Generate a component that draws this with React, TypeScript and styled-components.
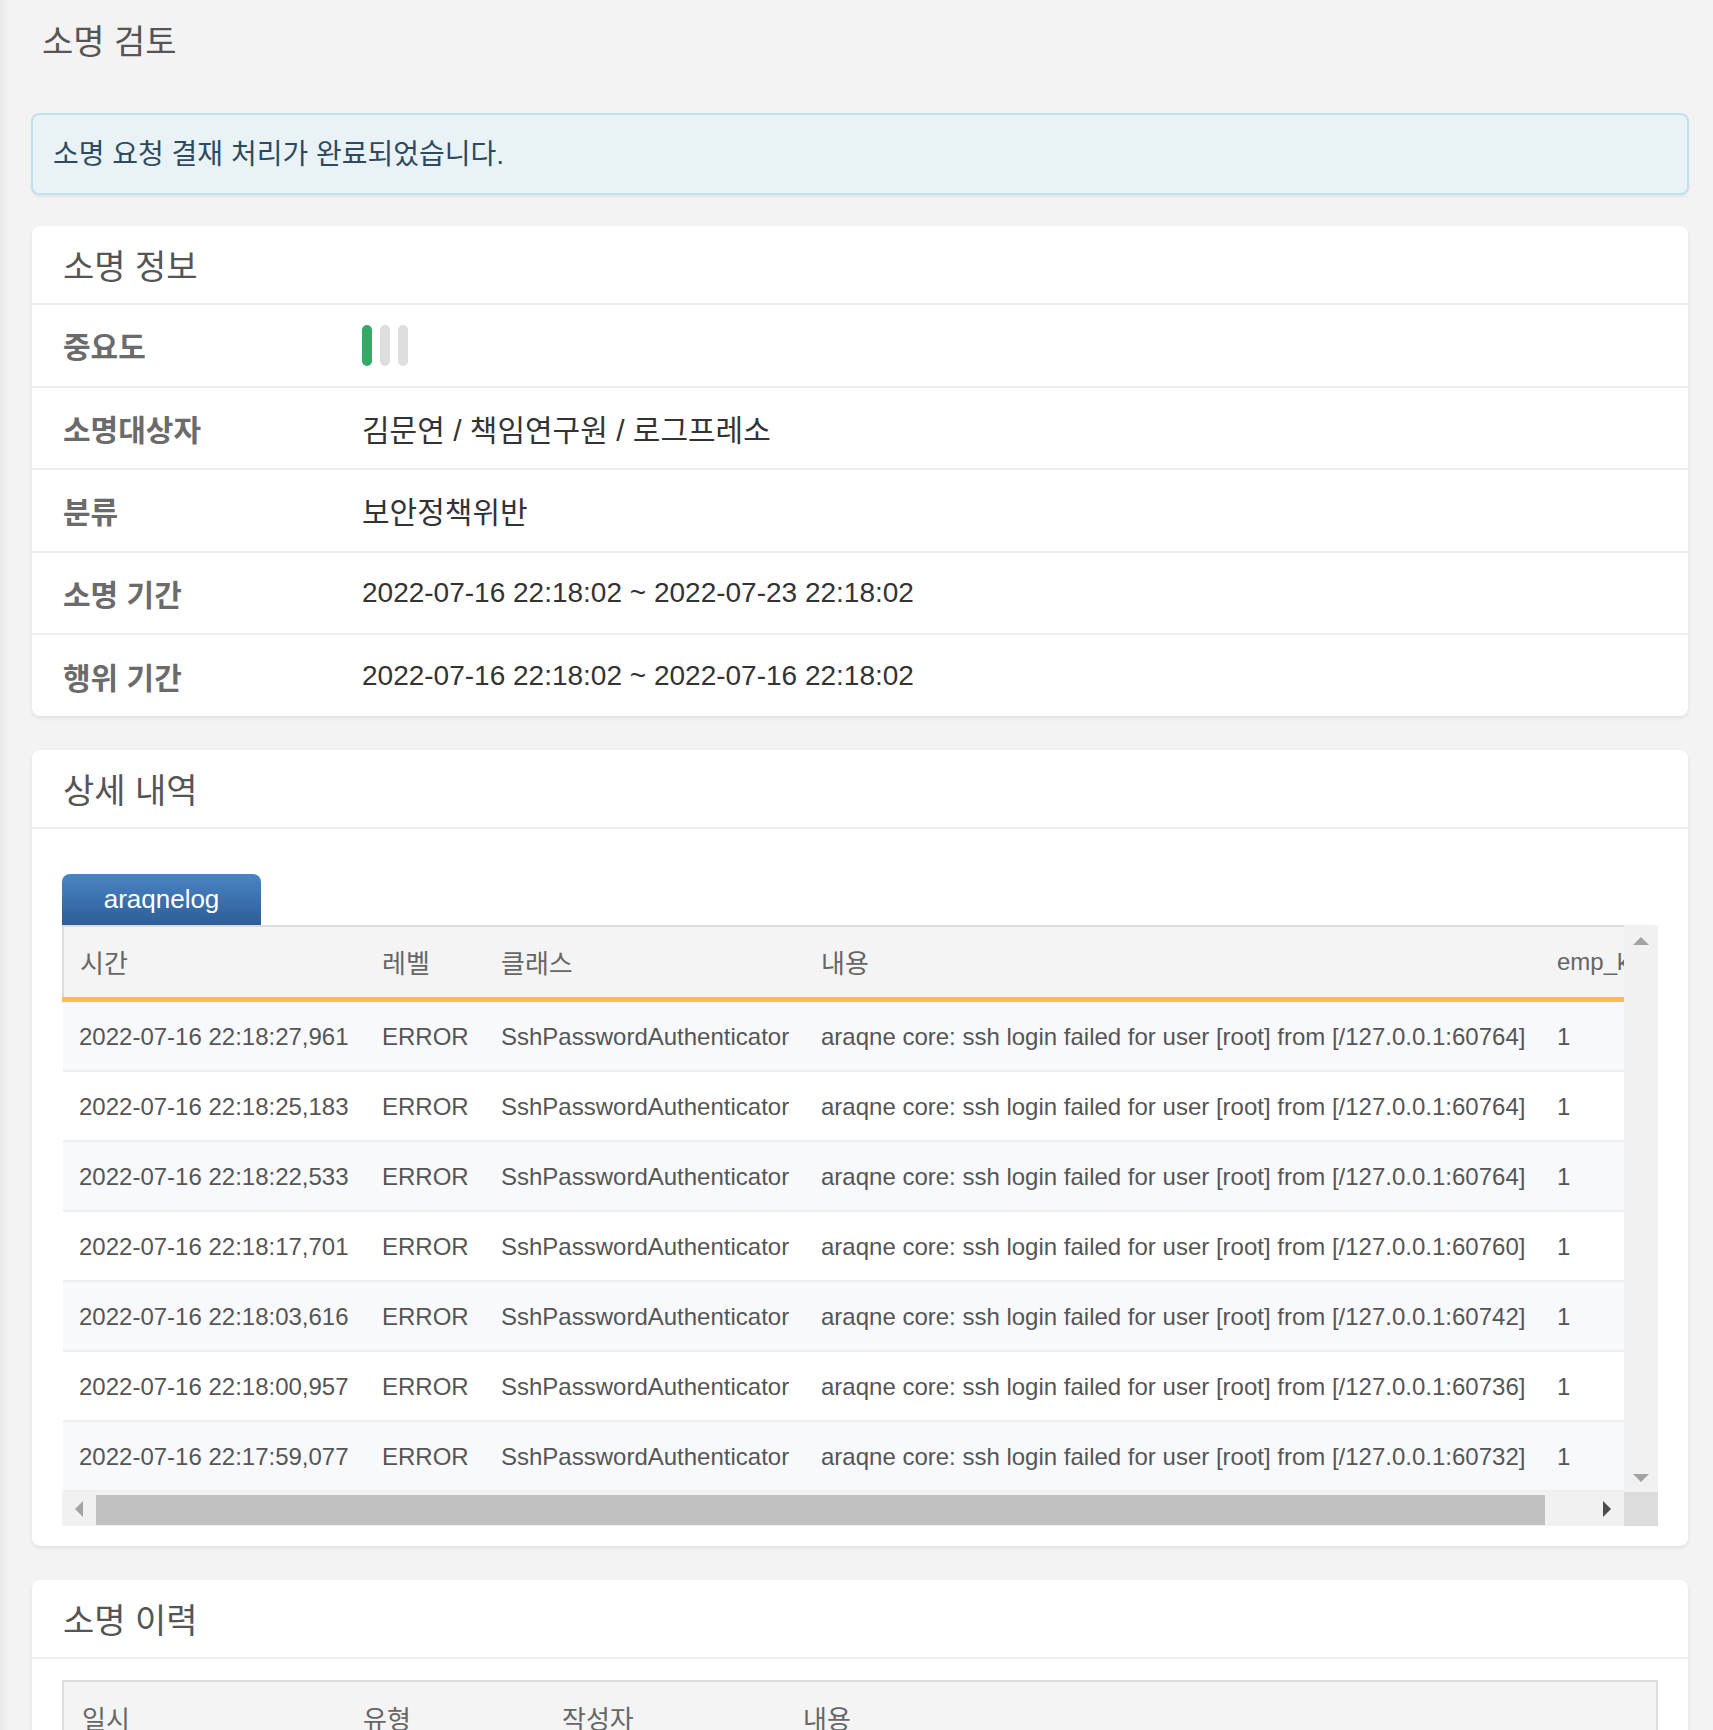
import React from 'react';
import styled, { createGlobalStyle } from 'styled-components';

const GlobalStyle = createGlobalStyle`
  html, body {
    margin: 0;
    padding: 0;
    overflow: hidden;
  }
  body {
    background: linear-gradient(to right, #e8e9e9 0, #f2f3f2 10px) #f2f3f2;
    font-family: "Liberation Sans", "Noto Sans CJK KR", sans-serif;
    color: #333;
  }
`;

const Page = styled.div`
  display: flex;
  flex-direction: column;
  padding: 0 25px 60px 32px;
`;

const PageTitle = styled.h2`
  margin: 0;
  padding: 22px 0 0 10px;
  height: 40px;
  line-height: 40px;
  font-size: 34px;
  font-weight: 400;
  color: #555;
`;

const Alert = styled.div`
  margin: 51px -1px 31px -1px;
  box-sizing: border-box;
  height: 82px;
  padding: 0 20px 5px;
  display: flex;
  align-items: center;
  background: #e9f3f6;
  border: 2px solid #bfe0ee;
  border-radius: 8px;
  box-shadow: 0 2px 3px rgba(0, 0, 0, 0.06);
  font-size: 28px;
  color: #2e4a62;
`;

const Card = styled.section`
  background: #fff;
  border-radius: 8px;
  box-shadow: 0 2px 4px rgba(0, 0, 0, 0.08);
  margin-bottom: 34px;
`;

const CardHeader = styled.div`
  height: 77px;
  padding: 0 31px;
  display: flex;
  align-items: center;
  border-bottom: 2px solid #ededed;
  font-size: 34px;
  color: #555;
`;

const InfoRow = styled.div`
  display: grid;
  grid-template-columns: 299px 1fr;
  align-items: center;
  height: 80.6px;
  padding: 0 31px;
  border-bottom: 2px solid #ededed;
  &:last-child {
    border-bottom: none;
  }
`;

const Label = styled.div`
  font-size: 30px;
  font-weight: 700;
  color: #6b6b6b;
`;

const Value = styled.div<{ $ko?: boolean }>`
  font-size: ${({ $ko }) => ($ko ? 30 : 28)}px;
  color: #333;
`;

const Bars = styled.div`
  display: flex;
  gap: 8px;
`;

const Bar = styled.span<{ $on: boolean }>`
  width: 10px;
  height: 41px;
  border-radius: 5px;
  background: ${({ $on }) => ($on ? '#33ab68' : '#dedede')};
`;

const CardBody = styled.div<{ $top: number }>`
  padding: ${({ $top }) => $top}px 30px 20px;
`;

const Tab = styled.div`
  width: 199px;
  height: 51px;
  display: flex;
  align-items: center;
  justify-content: center;
  border-radius: 8px 8px 0 0;
  background: linear-gradient(to bottom, #4a84c5, #2d5e97);
  color: #fff;
  font-size: 26px;
`;

const GridFrame = styled.div`
  display: grid;
  grid-template-columns: 1fr 34px;
  grid-template-rows: auto 34px;
`;

const Viewport = styled.div`
  overflow: hidden;
`;

const LogTable = styled.table`
  border-collapse: collapse;
  table-layout: fixed;
  width: 1678px;
  font-size: 24px;
  color: #555;
`;

const HeadCell = styled.th<{ $latin?: boolean }>`
  height: 70px;
  padding: 0 16px;
  text-align: left;
  font-weight: 400;
  font-size: ${({ $latin }) => ($latin ? 24 : 26)}px;
  color: #666;
  background: #f4f4f4;
  border-top: 2px solid #dcdcdc;
  border-bottom: 5px solid #fbc13a;
  white-space: nowrap;
  overflow: hidden;
  &:first-child {
    border-left: 2px solid #dcdcdc;
  }
`;

const BodyRow = styled.tr`
  &:nth-child(odd) {
    background: #f8f9fc;
  }
  &:nth-child(even) {
    background: #fff;
  }
`;

const Cell = styled.td`
  height: 66px;
  padding: 2px 14px 0 16px;
  border-bottom: 2px solid #eeeeee;
  white-space: nowrap;
  overflow: hidden;
`;

const VScroll = styled.div`
  background: #f1f1f1;
  display: flex;
  flex-direction: column;
  justify-content: space-between;
  align-items: center;
  padding: 12px 0 10px;
  border-top-right-radius: 3px;
`;

const HScroll = styled.div`
  display: flex;
  align-items: stretch;
  background: #f1f1f1;
`;

const ArrowBtn = styled.div`
  width: 34px;
  display: flex;
  align-items: center;
  justify-content: center;
`;

const Thumb = styled.div`
  margin: 3px 45px 1px 0;
  flex: 1;
  background: #c1c1c1;
`;

const Corner = styled.div`
  background: #dcdcdc;
`;

const HistoryTable = styled.table`
  width: 100%;
  border-collapse: collapse;
  table-layout: fixed;
  border: 2px solid #dcdcdc;
  font-size: 26px;
`;

const HistoryHead = styled.th`
  height: 72px;
  padding: 0 18px;
  text-align: left;
  font-weight: 400;
  color: #666;
  background: #f4f4f4;
`;

const Tri = ({ dir, color }: { dir: 'up' | 'down' | 'left' | 'right'; color: string }) => {
  const pts = {
    up: '0,8 8,0 16,8',
    down: '0,0 16,0 8,8',
    left: '8,0 8,16 0,8',
    right: '0,0 8,8 0,16',
  }[dir];
  const vertical = dir === 'up' || dir === 'down';
  return (
    <svg width={vertical ? 16 : 8} height={vertical ? 8 : 16} viewBox={vertical ? '0 0 16 8' : '0 0 8 16'}>
      <polygon points={pts} fill={color} />
    </svg>
  );
};

const logs = [
  ['2022-07-16 22:18:27,961', '60764'],
  ['2022-07-16 22:18:25,183', '60764'],
  ['2022-07-16 22:18:22,533', '60764'],
  ['2022-07-16 22:18:17,701', '60760'],
  ['2022-07-16 22:18:03,616', '60742'],
  ['2022-07-16 22:18:00,957', '60736'],
  ['2022-07-16 22:17:59,077', '60732'],
];

export default function App() {
  return (
    <>
      <GlobalStyle />
      <Page>
        <PageTitle>소명 검토</PageTitle>
        <Alert>소명 요청 결재 처리가 완료되었습니다.</Alert>

        <Card>
          <CardHeader>소명 정보</CardHeader>
          <InfoRow>
            <Label>중요도</Label>
            <Bars>
              <Bar $on />
              <Bar $on={false} />
              <Bar $on={false} />
            </Bars>
          </InfoRow>
          <InfoRow>
            <Label>소명대상자</Label>
            <Value $ko>김문연 / 책임연구원 / 로그프레소</Value>
          </InfoRow>
          <InfoRow>
            <Label>분류</Label>
            <Value $ko>보안정책위반</Value>
          </InfoRow>
          <InfoRow>
            <Label>소명 기간</Label>
            <Value>2022-07-16 22:18:02 ~ 2022-07-23 22:18:02</Value>
          </InfoRow>
          <InfoRow>
            <Label>행위 기간</Label>
            <Value>2022-07-16 22:18:02 ~ 2022-07-16 22:18:02</Value>
          </InfoRow>
        </Card>

        <Card>
          <CardHeader>상세 내역</CardHeader>
          <CardBody $top={45}>
            <Tab>araqnelog</Tab>
            <GridFrame>
              <Viewport>
                <LogTable>
                  <colgroup>
                    <col style={{ width: 303 }} />
                    <col style={{ width: 119 }} />
                    <col style={{ width: 320 }} />
                    <col style={{ width: 736 }} />
                    <col style={{ width: 200 }} />
                  </colgroup>
                  <thead>
                    <tr>
                      <HeadCell>시간</HeadCell>
                      <HeadCell>레벨</HeadCell>
                      <HeadCell>클래스</HeadCell>
                      <HeadCell>내용</HeadCell>
                      <HeadCell $latin>emp_key</HeadCell>
                    </tr>
                  </thead>
                  <tbody>
                    {logs.map(([time, port]) => (
                      <BodyRow key={time}>
                        <Cell>{time}</Cell>
                        <Cell>ERROR</Cell>
                        <Cell>SshPasswordAuthenticator</Cell>
                        <Cell>araqne core: ssh login failed for user [root] from [/127.0.0.1:{port}]</Cell>
                        <Cell>1</Cell>
                      </BodyRow>
                    ))}
                  </tbody>
                </LogTable>
              </Viewport>
              <VScroll>
                <Tri dir="up" color="#a3a3a3" />
                <Tri dir="down" color="#a3a3a3" />
              </VScroll>
              <HScroll>
                <ArrowBtn>
                  <Tri dir="left" color="#a3a3a3" />
                </ArrowBtn>
                <Thumb />
                <ArrowBtn>
                  <Tri dir="right" color="#4d4d4d" />
                </ArrowBtn>
              </HScroll>
              <Corner />
            </GridFrame>
          </CardBody>
        </Card>

        <Card>
          <CardHeader>소명 이력</CardHeader>
          <CardBody $top={21}>
            <HistoryTable>
              <colgroup>
                <col style={{ width: 282 }} />
                <col style={{ width: 199 }} />
                <col style={{ width: 241 }} />
                <col />
              </colgroup>
              <thead>
                <tr>
                  <HistoryHead>일시</HistoryHead>
                  <HistoryHead>유형</HistoryHead>
                  <HistoryHead>작성자</HistoryHead>
                  <HistoryHead>내용</HistoryHead>
                </tr>
              </thead>
            </HistoryTable>
          </CardBody>
        </Card>
      </Page>
    </>
  );
}
